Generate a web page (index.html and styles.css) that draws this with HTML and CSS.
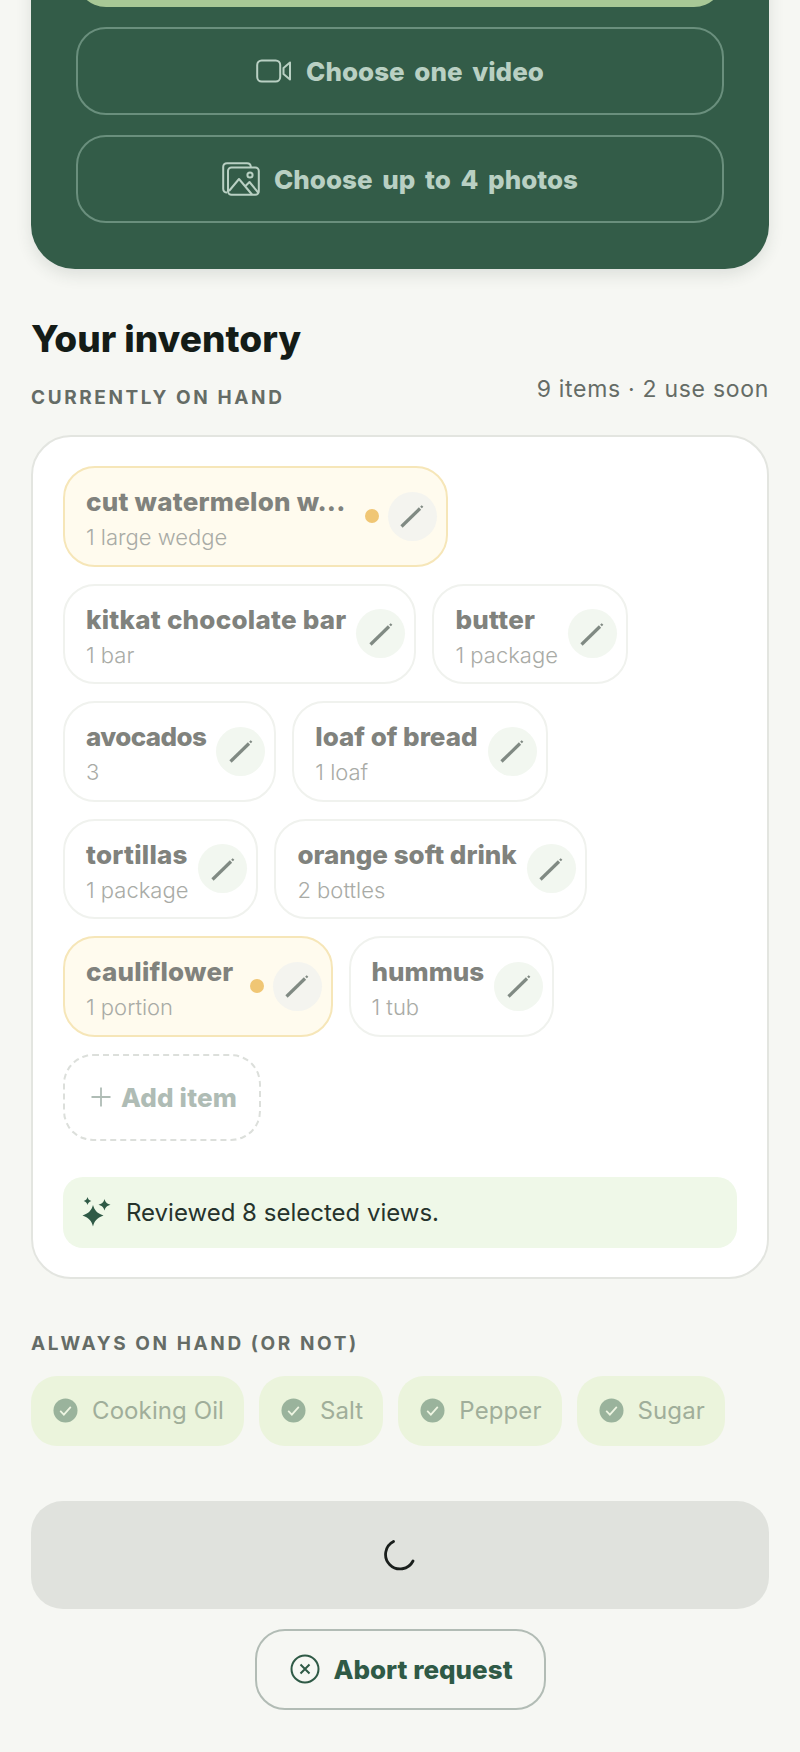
FILE: index.html
```html
<!DOCTYPE html>
<html lang="en">
<head>
    <meta charset="UTF-8">
    <meta name="viewport" content="width=device-width, initial-scale=1.0">
    <title>Your inventory</title>
    <link rel="stylesheet" href="styles.css">
</head>
<body>
    <div class="page">
        <section class="upload-panel">
            <div class="upload-main"></div>
            <button class="upload-btn">
                <svg class="video-icon" viewBox="0 0 36 24" fill="none" stroke="currentColor" stroke-width="2" stroke-linejoin="round"><rect x="1.2" y="1.5" width="23" height="21" rx="4.5"/><path d="M34 3.5v17l-6.500-5.500v-6z"/></svg>
                Choose one video
            </button>
            <button class="upload-btn">
                <svg class="photo-icon" viewBox="0 0 38 34" fill="none" stroke="currentColor" stroke-width="2" stroke-linejoin="round"><path d="M5 30.5c-2.4 0-3.8-1.4-3.8-3.8V5C1.200 2.600 2.600 1.200 5 1.200h20c2.400 0 3.800 1.400 3.800 3.800"/><rect x="6" y="5.500" width="30.800" height="27.300" rx="3.500"/><circle cx="28" cy="13" r="2.600"/><path d="M7 29l10-12 13 15.500M23 24.500l4.500-4.500 9 11"/></svg>
                Choose up to 4 photos
            </button>
        </section>

        <h1 class="inv-title">Your inventory</h1>
        <div class="inv-head">
            <h2 class="section-label">CURRENTLY ON HAND</h2>
            <span class="inv-count">9 items · 2 use soon</span>
        </div>

        <section class="inv-card">
            <div class="chips">
                <div class="chip chip-soon">
                    <div class="chip-text"><span class="chip-name">cut watermelon w...</span><span class="chip-qty">1 large wedge</span></div>
                    <span class="soon-dot soon-dot-wide"></span>
                    <span class="edit-btn"><svg viewBox="0 0 24 24"><path class="pen" d="M1.500 22.500L20 4.500"/><path class="pen-tip" d="M21 3.500l1.500-1.500"/></svg></span>
                </div>
                <div class="chip">
                    <div class="chip-text"><span class="chip-name">kitkat chocolate bar</span><span class="chip-qty">1 bar</span></div>
                    <span class="edit-btn"><svg viewBox="0 0 24 24"><path class="pen" d="M1.500 22.500L20 4.500"/><path class="pen-tip" d="M21 3.500l1.500-1.500"/></svg></span>
                </div>
                <div class="chip">
                    <div class="chip-text"><span class="chip-name">butter</span><span class="chip-qty">1 package</span></div>
                    <span class="edit-btn"><svg viewBox="0 0 24 24"><path class="pen" d="M1.500 22.500L20 4.500"/><path class="pen-tip" d="M21 3.500l1.500-1.500"/></svg></span>
                </div>
                <div class="chip">
                    <div class="chip-text"><span class="chip-name chip-name-tight">avocados</span><span class="chip-qty">3</span></div>
                    <span class="edit-btn"><svg viewBox="0 0 24 24"><path class="pen" d="M1.500 22.500L20 4.500"/><path class="pen-tip" d="M21 3.500l1.500-1.500"/></svg></span>
                </div>
                <div class="chip">
                    <div class="chip-text"><span class="chip-name chip-name-snug">loaf of bread</span><span class="chip-qty">1 loaf</span></div>
                    <span class="edit-btn"><svg viewBox="0 0 24 24"><path class="pen" d="M1.500 22.500L20 4.500"/><path class="pen-tip" d="M21 3.500l1.500-1.500"/></svg></span>
                </div>
                <div class="chip">
                    <div class="chip-text"><span class="chip-name">tortillas</span><span class="chip-qty">1 package</span></div>
                    <span class="edit-btn"><svg viewBox="0 0 24 24"><path class="pen" d="M1.500 22.500L20 4.500"/><path class="pen-tip" d="M21 3.500l1.500-1.500"/></svg></span>
                </div>
                <div class="chip">
                    <div class="chip-text"><span class="chip-name chip-name-snug">orange soft drink</span><span class="chip-qty">2 bottles</span></div>
                    <span class="edit-btn"><svg viewBox="0 0 24 24"><path class="pen" d="M1.500 22.500L20 4.500"/><path class="pen-tip" d="M21 3.500l1.500-1.500"/></svg></span>
                </div>
                <div class="chip chip-soon">
                    <div class="chip-text"><span class="chip-name">cauliflower</span><span class="chip-qty">1 portion</span></div>
                    <span class="soon-dot"></span>
                    <span class="edit-btn"><svg viewBox="0 0 24 24"><path class="pen" d="M1.500 22.500L20 4.500"/><path class="pen-tip" d="M21 3.500l1.500-1.500"/></svg></span>
                </div>
                <div class="chip">
                    <div class="chip-text"><span class="chip-name chip-name-snug">hummus</span><span class="chip-qty">1 tub</span></div>
                    <span class="edit-btn"><svg viewBox="0 0 24 24"><path class="pen" d="M1.500 22.500L20 4.500"/><path class="pen-tip" d="M21 3.500l1.500-1.500"/></svg></span>
                </div>
                <button class="add-chip">
                    <svg viewBox="0 0 20 20" fill="none" stroke="currentColor" stroke-width="1.800"><path d="M10 0.500v19M0.500 10h19"/></svg>
                    Add item
                </button>
            </div>
            <div class="review-note">
                <svg viewBox="0 0 30 30" fill="#2f5a46"><path d="M12 8c1.500 5 3.500 8 10.500 10.500C15.500 21 13.500 24 12 29.500 10.500 24 8.500 21 1.500 18.500 8.500 16 10.500 13 12 8z"/><path d="M23.500 2c.8 3 2 4.500 6 5.800-4 1.300-5.200 2.800-6 5.800-.8-3-2-4.500-6-5.800 4-1.300 5.200-2.800 6-5.800z"/><path d="M6.500 0c.5 2 1.200 3 3.800 4C7.700 5 7 6 6.500 8 6 6 5.300 5 2.700 4 5.300 3 6 2 6.500 0z"/></svg>
                <span>Reviewed 8 selected views.</span>
            </div>
        </section>

        <h2 class="section-label staples-label">ALWAYS ON HAND (OR NOT)</h2>
        <div class="staples">
            <span class="staple"><svg viewBox="0 0 26 26"><circle cx="13" cy="13" r="12.500" fill="#9ab39c"/><path d="M7.500 13.500l3.800 3.800 7.200-8" fill="none" stroke="#eef5e2" stroke-width="1.800"/></svg>Cooking Oil</span>
            <span class="staple"><svg viewBox="0 0 26 26"><circle cx="13" cy="13" r="12.500" fill="#9ab39c"/><path d="M7.500 13.500l3.800 3.800 7.200-8" fill="none" stroke="#eef5e2" stroke-width="1.800"/></svg>Salt</span>
            <span class="staple"><svg viewBox="0 0 26 26"><circle cx="13" cy="13" r="12.500" fill="#9ab39c"/><path d="M7.500 13.500l3.800 3.800 7.200-8" fill="none" stroke="#eef5e2" stroke-width="1.800"/></svg>Pepper</span>
            <span class="staple"><svg viewBox="0 0 26 26"><circle cx="13" cy="13" r="12.500" fill="#9ab39c"/><path d="M7.500 13.500l3.800 3.800 7.200-8" fill="none" stroke="#eef5e2" stroke-width="1.800"/></svg>Sugar</span>
        </div>

        <div class="submit-bar">
            <svg class="spinner" viewBox="0 0 32 32" fill="none" stroke="#1a1f1c" stroke-width="2.800" stroke-linecap="round"><path d="M9.500 2.500A14.500 14.500 0 1 0 29 22"/></svg>
        </div>

        <button class="abort-btn">
            <svg viewBox="0 0 30 30" fill="none" stroke="#2f5a46" stroke-width="2"><circle cx="15" cy="15" r="13.500"/><path d="M10.500 10.500l9 9M19.500 10.500l-9 9"/></svg>
            Abort request
        </button>
    </div>
</body>
</html>
```

FILE: styles.css
```css
* {
    box-sizing: border-box;
}
body {
    margin: 0;
    background-color: #f6f7f3;
    font-family: Inter, "Noto Sans", sans-serif;
    overflow: hidden;
}
button {
    font-family: inherit;
    cursor: pointer;
}
.page {
    padding: 0 31px;
}
.upload-panel {
    margin-top: -100px;
    padding: 20px 45px 46px;
    display: flex;
    flex-direction: column;
    gap: 20px;
    background-color: #335c48;
    border-radius: 44px;
    box-shadow: 0 6px 16px rgba(40, 60, 50, 0.12);
}
.upload-main {
    height: 87px;
    background-color: #a8c896;
    border-radius: 30px;
}
.upload-btn {
    height: 88px;
    display: flex;
    align-items: center;
    justify-content: center;
    gap: 14px;
    background: transparent;
    border: 2px solid #6a8f7d;
    border-radius: 30px;
    color: #b9d0c3;
    font-size: 26px;
    font-weight: 800;
    word-spacing: 4px;
}
.video-icon {
    width: 36px;
    height: 24px;
}
.photo-icon {
    width: 38px;
    height: 34px;
}
.inv-title {
    margin: 48px 0 0;
    font-size: 37px;
    line-height: 44px;
    font-weight: 800;
    color: #141c17;
}
.inv-head {
    margin-top: 14px;
    display: flex;
    justify-content: space-between;
    align-items: flex-start;
}
.section-label {
    margin: 0;
    padding-top: 11px;
    font-size: 19px;
    line-height: 24px;
    font-weight: 700;
    letter-spacing: 2.6px;
    color: #656c66;
}
.inv-count {
    font-size: 23px;
    line-height: 28px;
    font-weight: 400;
    letter-spacing: 0.7px;
    color: #656c66;
}
.inv-card {
    margin-top: 25px;
    padding: 29px 30px 29px;
    background-color: #fff;
    border: 2px solid #e3e5e0;
    border-radius: 40px;
}
.chips {
    display: flex;
    flex-wrap: wrap;
    gap: 17px 16px;
}
.chip {
    height: 100.5px;
    padding: 0 9px 0 21px;
    display: flex;
    align-items: center;
    background-color: #fff;
    border: 2px solid #f0f2ee;
    border-radius: 32px;
}
.chip-soon {
    background-color: #fffbee;
    border-color: #f6e6b8;
}
.chip-text {
    display: flex;
    flex-direction: column;
    gap: 6px;
    margin-right: 10px;
    padding-top: 6px;
}
.chip-name {
    font-size: 26px;
    line-height: 30px;
    font-weight: 800;
    letter-spacing: 0.25px;
    color: #80827d;
    white-space: nowrap;
}
.chip-name-snug {
    letter-spacing: 0;
}
.chip-name-tight {
    letter-spacing: -0.6px;
}
.chip-qty {
    font-size: 22px;
    line-height: 28px;
    font-weight: 300;
    color: #a9aba6;
    white-space: nowrap;
}
.soon-dot {
    width: 14px;
    height: 14px;
    margin: 0 9px 0 6px;
    background-color: #f0c674;
    border-radius: 50%;
}
.soon-dot-wide {
    margin-left: 9px;
}
.edit-btn {
    width: 49px;
    height: 49px;
    display: flex;
    align-items: center;
    justify-content: center;
    background-color: #f2f7f0;
    border-radius: 50%;
}
.chip-soon .edit-btn {
    background-color: #f4f4ef;
}
.edit-btn svg {
    width: 24px;
    height: 24px;
}
.pen {
    fill: none;
    stroke: #808a83;
    stroke-width: 3.2;
}
.pen-tip {
    fill: none;
    stroke: #808a83;
    stroke-width: 2.4;
}
.add-chip {
    height: 87px;
    padding: 0 22px 0 26px;
    display: flex;
    align-items: center;
    gap: 10px;
    background: transparent;
    border: 2px dashed #dcdfdb;
    border-radius: 30px;
    color: #afbcb5;
    font-size: 26px;
    font-weight: 800;
    letter-spacing: 0.15px;
}
.add-chip svg {
    width: 20px;
    height: 20px;
}
.review-note {
    margin-top: 36px;
    height: 71px;
    padding: 0 18px;
    display: flex;
    align-items: center;
    gap: 15px;
    background-color: #eff8e8;
    border-radius: 20px;
    font-size: 24px;
    color: #26332c;
}
.review-note svg {
    width: 30px;
    height: 30px;
}
.staples-label {
    margin-top: 53px;
    padding-top: 0;
}
.staples {
    margin-top: 20px;
    display: flex;
    gap: 15px;
}
.staple {
    height: 70px;
    padding: 0 20px 0 22px;
    display: flex;
    align-items: center;
    gap: 14px;
    background-color: #ebf4dc;
    border-radius: 26px;
    font-size: 24px;
    letter-spacing: 0.1px;
    color: #a0ae9a;
}
.staple svg {
    width: 25px;
    height: 25px;
}
.submit-bar {
    margin-top: 55px;
    height: 108px;
    display: flex;
    align-items: center;
    justify-content: center;
    background-color: #e0e2dd;
    border-radius: 32px;
}
.spinner {
    width: 32px;
    height: 32px;
}
.abort-btn {
    margin: 20px auto 0;
    width: 291px;
    height: 81px;
    padding: 0 0 0 3px;
    display: flex;
    align-items: center;
    justify-content: center;
    gap: 13px;
    background: transparent;
    border: 2px solid #b2bcb5;
    border-radius: 30px;
    color: #2f5a46;
    font-size: 26px;
    font-weight: 800;
}
.abort-btn svg {
    width: 30px;
    height: 30px;
}
```
